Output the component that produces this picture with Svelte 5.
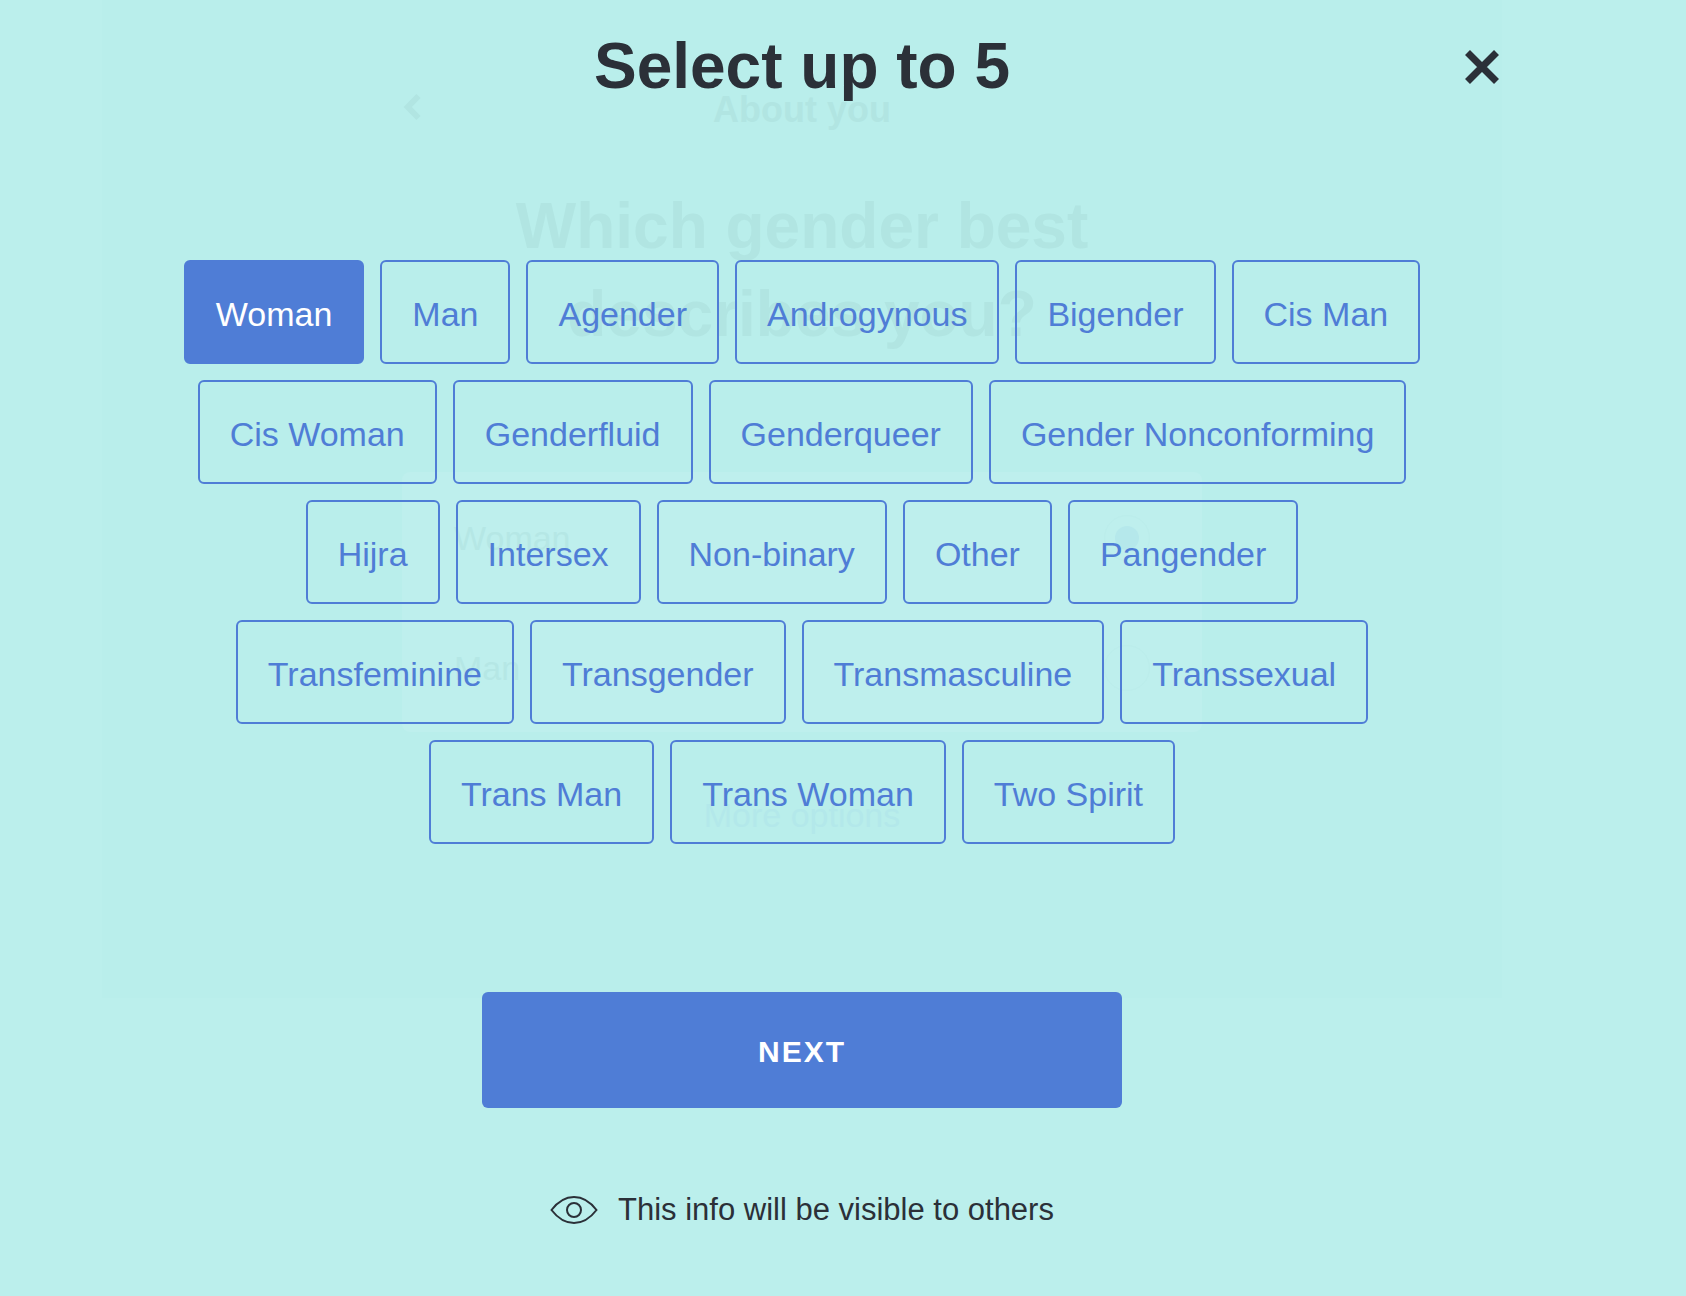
<script>
  const limit = 5;
  const options = [
    'Woman', 'Man', 'Agender', 'Androgynous', 'Bigender', 'Cis Man',
    'Cis Woman', 'Genderfluid', 'Genderqueer', 'Gender Nonconforming',
    'Hijra', 'Intersex', 'Non-binary', 'Other', 'Pangender',
    'Transfeminine', 'Transgender', 'Transmasculine', 'Transsexual',
    'Trans Man', 'Trans Woman', 'Two Spirit'
  ];
  let selected = $state(['Woman']);

  function toggle(option) {
    if (selected.includes(option)) {
      selected = selected.filter((item) => item !== option);
    } else if (selected.length < limit) {
      selected = [...selected, option];
    }
  }
</script>

<div class="page">
  <!-- The previous step, faded out behind the dialog -->
  <div class="behind" aria-hidden="true" inert>
    <div class="column">
      <div class="step-head">
        <svg class="chevron" viewBox="0 0 20 38" width="20" height="38">
          <path d="M16.5 8 L5.8 19 L16.5 30" />
        </svg>
        <p class="step-name">About you</p>
        <span></span>
      </div>
      <p class="question">Which gender best<br />describes you?</p>
      <div class="card">
        <div class="choice"><span>Woman</span><span class="ring"><span class="dot"></span></span></div>
        <div class="choice"><span>Man</span><span class="ring"></span></div>
      </div>
      <p class="more">More options</p>
    </div>
  </div>

  <main class="dialog">
    <header class="head">
      <span></span>
      <h1>Select up to 5</h1>
      <button class="close" type="button" aria-label="Close">
        <svg viewBox="0 0 34 34" width="34" height="34">
          <path d="M2.5 2.5 L31.5 31.5 M31.5 2.5 L2.5 31.5" />
        </svg>
      </button>
    </header>

    <div class="chips" role="group" aria-label="Gender">
      {#each options as option}
        <button
          type="button"
          class="chip"
          class:on={selected.includes(option)}
          aria-pressed={selected.includes(option)}
          onclick={() => toggle(option)}>{option}</button>
      {/each}
    </div>

    <button class="next" type="button">NEXT</button>

    <p class="note">
      <svg class="eye" viewBox="0 0 48 28" width="48" height="28" aria-hidden="true">
        <path d="M1.5 14 C8 5.5 15 1 24 1 C33 1 40 5.5 46.5 14 C40 22.5 33 27 24 27 C15 27 8 22.5 1.5 14 Z" />
        <circle cx="24" cy="14" r="7" />
      </svg>
      <span>This info will be visible to others</span>
    </p>
  </main>
</div>

<style>
  :global(body) {
    margin: 0;
    background: #bbefec;
  }

  .page {
    --blue: #4f7dd6;
    --ink: #2b3038;
    display: grid;
    min-height: 100vh;
    padding-right: 82px;
    box-sizing: border-box;
    font-family: 'Liberation Sans', Arial, sans-serif;
    color: var(--ink);
  }

  .page p,
  .page h1 {
    margin: 0;
  }

  .behind,
  .dialog {
    grid-area: 1 / 1;
  }

  .behind {
    justify-self: center;
    align-self: start;
    width: 100%;
    max-width: 1400px;
    box-sizing: border-box;
    padding: 88px 0 161px;
    background: #b9eeeb;
    color: #b1e5e2;
  }

  .column {
    max-width: 800px;
    margin: 0 auto;
    text-align: center;
  }

  .step-head {
    display: grid;
    grid-template-columns: 1fr auto 1fr;
    align-items: start;
  }

  .chevron {
    fill: none;
    stroke: currentColor;
    stroke-width: 6;
  }

  .step-name {
    font-size: 36px;
    line-height: 44px;
    font-weight: 700;
  }

  .page .question {
    margin-top: 50px;
    font-size: 64px;
    line-height: 88px;
    font-weight: 700;
  }

  .card {
    margin-top: 114px;
    border-radius: 8px;
    background: #beefed;
    color: #b5e7e5;
  }

  .choice {
    display: flex;
    align-items: center;
    justify-content: space-between;
    height: 130px;
    box-sizing: border-box;
    padding: 2px 52px 0;
    font-size: 34px;
    line-height: 44px;
  }

  .ring {
    display: grid;
    place-items: center;
    width: 46px;
    height: 46px;
    box-sizing: border-box;
    border: 1px solid #bbedeb;
    border-radius: 50%;
  }

  .dot {
    width: 24px;
    height: 24px;
    border-radius: 50%;
    background: #b5e8eb;
  }

  .page .more {
    margin-top: 61px;
    font-size: 34px;
    line-height: 44px;
    color: #b3e8ea;
  }

  .dialog {
    display: flex;
    flex-direction: column;
    align-items: center;
    padding: 22px 0 68px;
  }

  .head {
    display: grid;
    grid-template-columns: 1fr auto 1fr;
    align-items: center;
    width: 100%;
    max-width: 1400px;
  }

  h1 {
    font-size: 64px;
    line-height: 88px;
    font-weight: 700;
  }

  button {
    font-family: inherit;
    cursor: pointer;
  }

  .close {
    display: flex;
    justify-self: end;
    padding: 5px 3px 3px;
    border: 0;
    background: none;
    color: inherit;
  }

  .close path {
    fill: none;
    stroke: currentColor;
    stroke-width: 7;
  }

  .chips {
    display: flex;
    flex-wrap: wrap;
    justify-content: center;
    gap: 16px;
    max-width: 1264px;
    margin-top: 150px;
  }

  .chip {
    padding: 30px 30px 26px;
    border: 2px solid var(--blue);
    border-radius: 6px;
    background: none;
    color: var(--blue);
    font-size: 34px;
    line-height: 44px;
  }

  .chip.on {
    background: var(--blue);
    color: #fff;
  }

  .next {
    width: 100%;
    max-width: 640px;
    margin-top: 148px;
    padding: 38px 0 34px;
    border: 0;
    border-radius: 6px;
    background: var(--blue);
    color: #fff;
    font-size: 30px;
    line-height: 44px;
    font-weight: 700;
    letter-spacing: 2px;
  }

  .note {
    display: flex;
    align-items: center;
    gap: 20px;
    font-size: 31px;
    line-height: 36px;
  }

  .page .note {
    margin-top: 84px;
  }

  .eye {
    fill: none;
    stroke: currentColor;
    stroke-width: 2;
  }
</style>
